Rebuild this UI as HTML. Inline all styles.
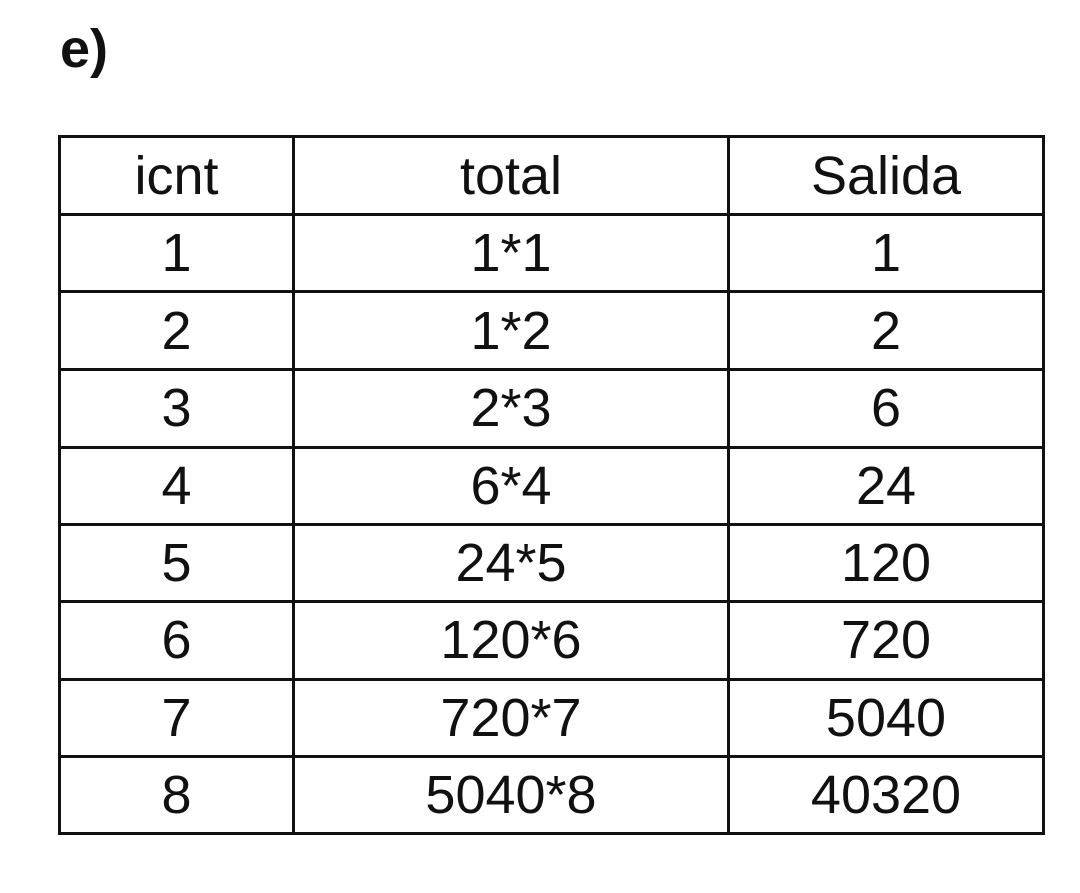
<!DOCTYPE html>
<html><head><meta charset="utf-8"><style>
body{margin:0;width:1080px;height:893px;background:#fff;position:relative;font-family:"Liberation Sans",Arial,sans-serif;color:#111;overflow:hidden}
.h{position:absolute;left:60px;top:18px;font-weight:bold;font-size:54px}
.hl{position:absolute;left:58px;width:987px;height:3px;background:#111}
.vl{position:absolute;top:135px;height:700px;width:3px;background:#111}
.c{position:absolute;text-align:center;font-size:54px;line-height:77px}
</style></head><body>
<div class="h">e)</div>
<div class="hl" style="top:135px"></div>
<div class="hl" style="top:213px"></div>
<div class="hl" style="top:290px"></div>
<div class="hl" style="top:368px"></div>
<div class="hl" style="top:446px"></div>
<div class="hl" style="top:523px"></div>
<div class="hl" style="top:600px"></div>
<div class="hl" style="top:678px"></div>
<div class="hl" style="top:755px"></div>
<div class="hl" style="top:832px"></div>
<div class="vl" style="left:58px"></div>
<div class="vl" style="left:292px"></div>
<div class="vl" style="left:727px"></div>
<div class="vl" style="left:1042px"></div>
<div id="t"></div>
<script>
var rows=[["icnt","total","Salida"],["1","1*1","1"],["2","1*2","2"],["3","2*3","6"],["4","6*4","24"],["5","24*5","120"],["6","120*6","720"],["7","720*7","5040"],["8","5040*8","40320"]];
var cols=[[60,233],[294,434],[729,314]];
var h="";
rows.forEach(function(r,i){var top=138+i*77.4;r.forEach(function(t,j){h+='<div class="c" style="left:'+cols[j][0]+'px;width:'+cols[j][1]+'px;top:'+top+'px">'+t+'</div>';});});
document.getElementById("t").innerHTML=h;
</script>
</body></html>
